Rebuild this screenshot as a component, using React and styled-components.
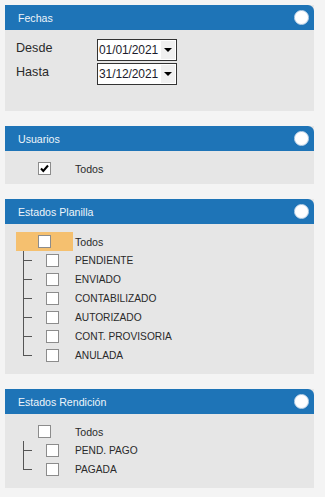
import styled, { createGlobalStyle } from "styled-components";

const GlobalStyle = createGlobalStyle`
    body {
        margin: 0;
        background-color: #f4f4f4;
        font-family: "Liberation Sans", Arial, sans-serif;
        color: #2a2a2a;
    }
`;

const planilla = ["PENDIENTE", "ENVIADO", "CONTABILIZADO", "AUTORIZADO", "CONT. PROVISORIA", "ANULADA"];
const rendicion = ["PEND. PAGO", "PAGADA"];

function CheckMark() {
    return (
        <svg width="11" height="11" viewBox="0 0 11 11">
            <path d="M2 5.5 L4.3 8 L9 2.5" stroke="#000" strokeWidth="2" fill="none" />
        </svg>
    );
}

function Tree({ items, highlight }) {
    return (
        <TreeList>
            <ParentRow>
                <CheckSlot $highlight={highlight}>
                    <Box />
                </CheckSlot>
                <RowText>Todos</RowText>
            </ParentRow>
            {items.map((item, i) => (
                <ChildRow key={item}>
                    <Connector $last={i === items.length - 1} />
                    <Box />
                    <ItemText>{item}</ItemText>
                </ChildRow>
            ))}
        </TreeList>
    );
}

function App() {
    return (
        <>
            <GlobalStyle />
            <Page>
                <Panel>
                    <Header>
                        <Title>Fechas</Title>
                        <Toggle />
                    </Header>
                    <DatesBody>
                        <FieldRow>
                            <Label>Desde</Label>
                            <DateSelect>
                                <DateValue>01/01/2021</DateValue>
                                <Arrow />
                            </DateSelect>
                        </FieldRow>
                        <FieldRow>
                            <Label>Hasta</Label>
                            <DateSelect>
                                <DateValue>31/12/2021</DateValue>
                                <Arrow />
                            </DateSelect>
                        </FieldRow>
                    </DatesBody>
                </Panel>

                <Panel>
                    <Header>
                        <Title>Usuarios</Title>
                        <Toggle />
                    </Header>
                    <UsersBody>
                        <ParentRow>
                            <CheckSlot>
                                <Box><CheckMark /></Box>
                            </CheckSlot>
                            <RowText>Todos</RowText>
                        </ParentRow>
                    </UsersBody>
                </Panel>

                <Panel>
                    <Header>
                        <Title>Estados Planilla</Title>
                        <Toggle />
                    </Header>
                    <Tree items={planilla} highlight />
                </Panel>

                <Panel>
                    <Header>
                        <Title>Estados Rendición</Title>
                        <Toggle />
                    </Header>
                    <Tree items={rendicion} />
                </Panel>
            </Page>
        </>
    );
}

const Page = styled.div`
    display: flex;
    flex-direction: column;
    gap: 15px;
    padding: 5px 11px 5px 5px;
`;

const Panel = styled.section`
    background-color: #e6e6e6;
`;

const Header = styled.div`
    height: 25px;
    background-color: #1e74b7;
    border-radius: 0 6px 0 0;
    display: flex;
    align-items: center;
    justify-content: space-between;
    padding: 0 5px 0 13px;
`;

const Title = styled.div`
    color: #eef4fa;
    font-size: 10.6px;
`;

const Toggle = styled.span`
    width: 15px;
    height: 15px;
    box-sizing: border-box;
    border-radius: 50%;
    background: radial-gradient(circle at 45% 40%, #ffffff 60%, #e4ecf4 100%);
    border: 1px solid #c6d8ea;
`;

const DatesBody = styled.div`
    padding: 9px 0 26px 11px;
    display: flex;
    flex-direction: column;
    gap: 2px;
`;

const FieldRow = styled.div`
    display: grid;
    grid-template-columns: 81px auto;
    align-items: center;
`;

const Label = styled.span`
    font-size: 12.6px;
    color: #2a2a2a;
    margin-top: -4px;
`;

const DateSelect = styled.div`
    width: 80px;
    height: 22px;
    box-sizing: border-box;
    border: 1px solid #333;
    background: #fff;
    display: flex;
    align-items: stretch;
`;

const DateValue = styled.span`
    flex: 1;
    font-size: 12px;
    color: #1c1c2c;
    padding-left: 1px;
    display: flex;
    align-items: center;
    letter-spacing: -0.1px;
`;

const Arrow = styled.span`
    width: 14px;
    margin: 1px 1px 1px 0;
    background: #f0f0f0;
    display: flex;
    align-items: center;
    justify-content: center;
    &::before {
        content: "";
        border-left: 4px solid transparent;
        border-right: 4px solid transparent;
        border-top: 4px solid #000;
    }
`;

const UsersBody = styled.div`
    padding: 8px 0 6px;
`;

const TreeList = styled.div`
    padding: 8px 0 9px;
`;

const ParentRow = styled.div`
    display: flex;
    align-items: center;
    height: 19px;
    padding-left: 11px;
`;

const CheckSlot = styled.span`
    width: 57px;
    height: 19px;
    display: flex;
    align-items: center;
    padding-left: 22px;
    box-sizing: border-box;
    background-color: ${(p) => (p.$highlight ? "#f5c06f" : "transparent")};
`;

const Box = styled.span`
    width: 13px;
    height: 13px;
    box-sizing: border-box;
    border: 1px solid #8c8c8c;
    background: #fff;
    display: flex;
    align-items: center;
    justify-content: center;
`;

const RowText = styled.span`
    margin-left: 2px;
    font-size: 10.6px;
    color: #2a2a2a;
`;

const ChildRow = styled.div`
    display: flex;
    align-items: center;
    height: 19px;
    padding-left: 18px;
    ${Box} {
        margin-left: 14px;
    }
`;

const Connector = styled.span`
    position: relative;
    width: 9px;
    align-self: stretch;
    &::before {
        content: "";
        position: absolute;
        left: 0;
        top: 0;
        width: 1px;
        height: ${(p) => (p.$last ? "10px" : "100%")};
        background: #555;
    }
    &::after {
        content: "";
        position: absolute;
        left: 0;
        top: 9px;
        width: 9px;
        height: 1px;
        background: #555;
    }
`;

const ItemText = styled.span`
    margin-left: 16px;
    font-size: 10.2px;
    color: #2a2a2a;
`;

export default App;
